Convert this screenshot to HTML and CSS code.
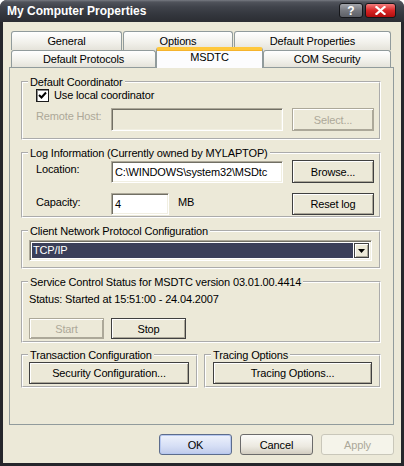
FILE: index.html
```html
<!DOCTYPE html>
<html>
<head>
<meta charset="utf-8">
<title>My Computer Properties</title>
<link rel="stylesheet" href="styles.css">
</head>
<body>
<div class="window">
  <div class="titlebar">
    <span class="title">My Computer Properties</span>
    <div class="caption-btns">
      <span class="cbtn help">?</span>
      <span class="cbtn close"><svg width="11" height="9" viewBox="0 0 11 9"><path d="M1.5 1 L9.5 8 M9.5 1 L1.5 8" stroke="#fff" stroke-width="2.2" stroke-linecap="square"/></svg></span>
    </div>
  </div>
  <div class="client">
    <div class="tabrow row1">
      <div class="tab t-general">General</div>
      <div class="tab t-options">Options</div>
      <div class="tab t-defprops">Default Properties</div>
    </div>
    <div class="tabrow row2">
      <div class="tab t-protocols">Default Protocols</div>
      <div class="tab selected t-msdtc">MSDTC</div>
      <div class="tab t-comsec">COM Security</div>
    </div>
    <div class="panel">
      <fieldset class="group g-coord">
        <legend>Default Coordinator</legend>
        <div class="gbody">
          <div class="chkrow">
            <span class="checkbox"><svg width="11" height="11" viewBox="0 0 11 11"><path d="M2 5 L4.5 7.5 L9 2.5" fill="none" stroke="#000" stroke-width="2"/></svg></span>
            <span class="chklabel">Use local coordinator</span>
          </div>
          <div class="frow r-remote">
            <span class="flabel disabled">Remote Host:</span>
            <div class="field disabled-field w-long"></div>
            <div class="btn side disabled-btn">Select...</div>
          </div>
        </div>
      </fieldset>

      <fieldset class="group g-log">
        <legend>Log Information (Currently owned by MYLAPTOP)</legend>
        <div class="gbody">
          <div class="frow r-location">
            <span class="flabel">Location:</span>
            <div class="field w-long">C:\WINDOWS\system32\MSDtc</div>
            <div class="btn side">Browse...</div>
          </div>
          <div class="frow r-capacity">
            <span class="flabel">Capacity:</span>
            <div class="field w-short">4</div>
            <span class="unit">MB</span>
            <div class="btn side">Reset log</div>
          </div>
        </div>
      </fieldset>

      <fieldset class="group g-net">
        <legend>Client Network Protocol Configuration</legend>
        <div class="gbody">
          <div class="combo">
            <div class="combo-val">TCP/IP</div>
            <div class="combo-btn"><svg width="7" height="4" viewBox="0 0 7 4"><path d="M0 0 H7 L3.5 4 Z" fill="#000"/></svg></div>
          </div>
        </div>
      </fieldset>

      <fieldset class="group g-svc">
        <legend>Service Control Status for MSDTC version 03.01.00.4414</legend>
        <div class="gbody">
          <div class="status">Status: Started at 15:51:00 - 24.04.2007</div>
          <div class="svc-btns">
            <div class="btn svc disabled-btn">Start</div>
            <div class="btn svc">Stop</div>
          </div>
        </div>
      </fieldset>

      <div class="pair">
        <fieldset class="group g-half g-trans">
          <legend>Transaction Configuration</legend>
          <div class="gbody">
            <div class="btn wide">Security Configuration...</div>
          </div>
        </fieldset>
        <fieldset class="group g-half g-trace">
          <legend>Tracing Options</legend>
          <div class="gbody">
            <div class="btn wide">Tracing Options...</div>
          </div>
        </fieldset>
      </div>
    </div>
    <div class="dlg-btns">
      <div class="dbtn ok">OK</div>
      <div class="dbtn cancel">Cancel</div>
      <div class="dbtn apply">Apply</div>
    </div>
  </div>
</div>
</body>
</html>
```

FILE: styles.css
```css
* { box-sizing: border-box; }
html, body { margin: 0; padding: 0; }
body {
  width: 404px;
  height: 466px;
  overflow: hidden;
  background: #ffffff;
  font-family: "Liberation Sans", Arial, sans-serif;
  font-size: 11px;
  letter-spacing: -0.15px;
  color: #000;
}

.window {
  width: 404px;
  height: 466px;
  background: #25262b;
  border-radius: 7px 7px 0 0;
  display: flex;
  flex-direction: column;
}

/* ---------- title bar ---------- */
.titlebar {
  height: 22px;
  flex: none;
  display: flex;
  align-items: flex-start;
  padding: 0 8px 0 7px;
  border-radius: 7px 7px 0 0;
  background: linear-gradient(#777a82 0px, #50535b 2px, #40434b 7px, #34373e 14px, #2b2d33 22px);
}
.title {
  flex: 1;
  color: #fff;
  font-weight: bold;
  font-size: 12px;
  letter-spacing: 0;
  line-height: 22px;
}
.caption-btns {
  display: flex;
  gap: 2px;
  margin-top: 3px;
}
.cbtn {
  height: 15px;
  border-radius: 3px;
  border: 1px solid #15161a;
  display: flex;
  align-items: center;
  justify-content: center;
}
.help {
  width: 24px;
  color: #fff;
  font-weight: bold;
  font-size: 12px;
  letter-spacing: 0;
  background: linear-gradient(#a3a5ab, #76787f 50%, #5d5f66);
}
.close {
  width: 31px;
  background: linear-gradient(#f27d7d, #d92626 50%, #b10e0e);
}

/* ---------- client area ---------- */
.client {
  flex: 1;
  margin: 0 3px 3px 3px;
  background: #ECE9D8;
  padding: 9px 7px 0 6px;
  display: flex;
  flex-direction: column;
}

/* ---------- tabs ---------- */
.tabrow {
  display: flex;
  margin-left: 2px;
}
.row1 { height: 19px; gap: 1px; }
.row2 { height: 17px; }
.tab {
  border: 1px solid #919B9C;
  border-bottom: none;
  border-radius: 3px 3px 0 0;
  background: linear-gradient(#ffffff, #f1f0ea 60%, #e5e3da);
  text-align: center;
  padding-top: 1px;
  line-height: 17px;
  white-space: nowrap;
}
.row2 .tab { line-height: 16px; padding-top: 0; }
.t-general { width: 111px; }
.t-options { width: 110px; }
.t-defprops { width: 157px; }
.t-protocols { width: 145px; }
.t-msdtc { width: 107px; }
.t-comsec { width: 128px; }
.tab.selected {
  position: relative;
  z-index: 1;
  margin-top: -3px;
  height: 21px;
  background: #FCFCFE;
  border-top: 3px solid #FFC83C;
  box-shadow: inset 0 1px 0 #F5B32E;
  line-height: 15px;
}

/* ---------- panel ---------- */
.panel {
  height: 358px;
  flex: none;
  border: 1px solid #919B9C;
  background: #ECE9D8;
  padding: 7px 12px 0 11px;
  display: flex;
  flex-direction: column;
}

.group {
  margin: 0;
  padding: 0;
  min-width: 0;
  border: 2px groove #ffffff;
}
.group legend {
  margin-left: 5px;
  padding: 0 2px;
  line-height: 14px;
  height: 14px;
}
.g-log { margin-top: 6px; }
.g-net { margin-top: 6px; }
.g-svc { margin-top: 6px; }
.pair {
  margin-top: 5px;
  display: grid;
  grid-template-columns: 177px 177px;
  column-gap: 6px;
}

.gbody { display: flex; flex-direction: column; }
.g-coord .gbody { padding: 0 5px 7px 0; }
.g-log .gbody { padding: 0 5px 1px 0; }
.g-net .gbody { padding: 2px 7px 6px 6px; }
.g-svc .gbody { padding: 4px 7px 2px 6px; }
.g-trans .gbody { padding: 0 7px 2px 6px; }
.g-trace .gbody { padding: 0 7px 2px 7px; }

/* checkbox */
.chkrow {
  height: 13px;
  padding-left: 13px;
  display: flex;
  align-items: center;
}
.checkbox {
  width: 13px;
  height: 13px;
  flex: none;
  background: #fff;
  border: 1px solid #1c1c1c;
  box-shadow: inset 1px 1px 0 #8a8a8a;
  display: flex;
  align-items: center;
  justify-content: center;
}
.chklabel { margin-left: 5px; line-height: 13px; }

/* form rows */
.frow {
  display: flex;
  align-items: flex-start;
}
.r-remote { margin-top: 6px; height: 23px; }
.r-location { height: 23px; }
.r-capacity { margin-top: 10px; height: 22px; }
.flabel {
  width: 88px;
  flex: none;
  padding-left: 13px;
  padding-top: 2px;
  line-height: 13px;
}
.r-location .flabel, .r-capacity .flabel { padding-top: 3px; }
.disabled { color: #ACA899; }
.field {
  height: 23px;
  flex: none;
  background: #fff;
  border: 1px solid;
  border-color: #ACA899 #ffffff #ffffff #ACA899;
  box-shadow: inset 1px 1px 0 #716F64, inset -1px -1px 0 #F1EFE2;
  padding: 0 3px;
  line-height: 21px;
  white-space: nowrap;
}
.r-location .field { margin-top: 1px; height: 22px; line-height: 20px; }
.r-capacity .field { height: 22px; line-height: 20px; }
.disabled-field { background: #ECE9D8; }
.w-long { width: 172px; }
.w-short { width: 58px; }
.unit {
  margin-left: 9px;
  padding-top: 3px;
  line-height: 13px;
  flex: 1;
}

/* buttons */
.btn {
  background: #ECE9D8;
  border: 1px solid #404040;
  box-shadow: inset 1px 1px 0 #ffffff, inset -1px -1px 0 #ACA899;
  display: flex;
  align-items: center;
  justify-content: center;
  white-space: nowrap;
}
.side {
  width: 82px;
  height: 23px;
  margin-left: auto;
}
.r-capacity .side { height: 22px; }
.disabled-btn {
  color: #ACA899;
  border-color: #ACA899;
}
.svc-btns {
  margin-top: 12px;
  display: flex;
  gap: 7px;
}
.svc { width: 75px; height: 21px; }
.wide { height: 22px; }

/* combo */
.combo {
  height: 21px;
  display: flex;
  background: #fff;
  border: 1px solid;
  border-color: #ACA899 #ffffff #ffffff #ACA899;
  box-shadow: inset 1px 1px 0 #716F64, inset -1px -1px 0 #F1EFE2;
  padding: 2px;
}
.combo-val {
  flex: 1;
  background: #3B3F59;
  color: #fff;
  padding-left: 1px;
  line-height: 15px;
}
.combo-btn {
  width: 15px;
  margin-left: 1px;
  background: #ECE9D8;
  border: 1px solid #404040;
  box-shadow: inset 1px 1px 0 #ffffff, inset -1px -1px 0 #ACA899;
  display: flex;
  align-items: center;
  justify-content: center;
}

.status { line-height: 13px; }

/* dialog buttons */
.dlg-btns {
  margin-top: 9px;
  display: flex;
  justify-content: flex-end;
  gap: 8px;
}
.dbtn {
  width: 73px;
  height: 21px;
  border-radius: 3px;
  display: flex;
  align-items: center;
  justify-content: center;
}
.ok {
  border: 1px solid #5c6c8c;
  background: linear-gradient(#eef2fc, #d5def5 60%, #bfcbea);
  box-shadow: inset 0 0 0 1px #b7c8f0;
}
.cancel {
  border: 1px solid #6b6b6b;
  background: linear-gradient(#fbfbf9, #ece9e0 60%, #d2cdc1);
}
.apply {
  border: 1px solid #C9C7BA;
  background: #F5F4EA;
  color: #ACA899;
}
```
